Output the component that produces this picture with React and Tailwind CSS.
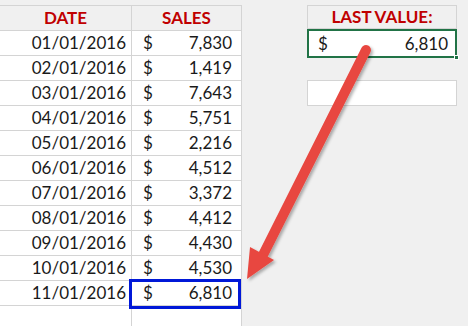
import React from 'react';

const rows = [
  ['01/01/2016', '7,830'],
  ['02/01/2016', '1,419'],
  ['03/01/2016', '7,643'],
  ['04/01/2016', '5,751'],
  ['05/01/2016', '2,216'],
  ['06/01/2016', '4,512'],
  ['07/01/2016', '3,372'],
  ['08/01/2016', '4,412'],
  ['09/01/2016', '4,430'],
  ['10/01/2016', '4,530'],
  ['11/01/2016', '6,810'],
];

function Arrow() {
  return (
    <svg className="absolute inset-0 pointer-events-none" width="468" height="326">
      <defs>
        <filter id="sh" x="-20%" y="-20%" width="140%" height="140%">
          <feDropShadow dx="2" dy="2" stdDeviation="1.5" floodColor="#000" floodOpacity="0.3" />
        </filter>
      </defs>
      <g filter="url(#sh)">
        <line x1="366" y1="50" x2="262" y2="257" stroke="#e8473f" strokeWidth="10" strokeLinecap="round" />
        <polygon points="247,279 250,247 274,260" fill="#e8473f" />
      </g>
    </svg>
  );
}

export default function App() {
  return (
    <div
      className="relative w-[468px] h-[326px] overflow-hidden bg-[#f0f0f0] flex text-[#1a1a1a] text-[17px]"
      style={{ fontFamily: 'Lato, "Open Sans", sans-serif' }}
    >
      {/* data table */}
      <div className="w-[242px] pt-[5px] flex flex-col">
        <div className="grid grid-cols-[132px_110px] border-t border-[#d4d4d4]">
          <div className="h-[25px] border-b border-r border-[#d4d4d4] flex items-center justify-center font-bold text-[#c00000]">
            DATE
          </div>
          <div className="h-[25px] border-b border-r border-[#d4d4d4] flex items-center justify-center font-bold text-[#c00000]">
            SALES
          </div>
          {rows.map(([d, v], i) => (
            <React.Fragment key={d}>
              <div className="h-[25px] bg-white border-b border-r border-[#d4d4d4] flex items-center justify-end pr-[5px]">
                {d}
              </div>
              <div className="relative h-[25px] bg-white border-b border-r border-[#d4d4d4] flex items-center justify-between pl-[11px] pr-[9px]">
                <span>$</span>
                <span>{v}</span>
                {i === rows.length - 1 && (
                  <div className="absolute left-[-3px] top-[-2px] w-[112px] h-[30px] border-[3px] border-[#0018d8]" />
                )}
              </div>
            </React.Fragment>
          ))}
          <div className="h-[40px] bg-white border-r border-[#d4d4d4]" />
          <div className="h-[40px] bg-white border-r border-[#d4d4d4]" />
        </div>
      </div>

      {/* result */}
      <div className="ml-[65px] w-[150px] pt-[5px] flex flex-col">
        <div className="h-[24px] border border-[#d4d4d4] flex items-center justify-center font-bold text-[#c00000]">
          LAST VALUE:
        </div>
        <div className="relative h-[29px] bg-white border-2 border-[#217346] flex items-center justify-between pl-[9px] pr-[7px]">
          <span>$</span>
          <span>6,810</span>
          <div className="absolute right-[-4px] bottom-[-4px] w-[5px] h-[5px] bg-[#217346] border border-white" />
        </div>
        <div className="mt-[22px] h-[26px] bg-white border border-[#d4d4d4]" />
      </div>

      <Arrow />
    </div>
  );
}
